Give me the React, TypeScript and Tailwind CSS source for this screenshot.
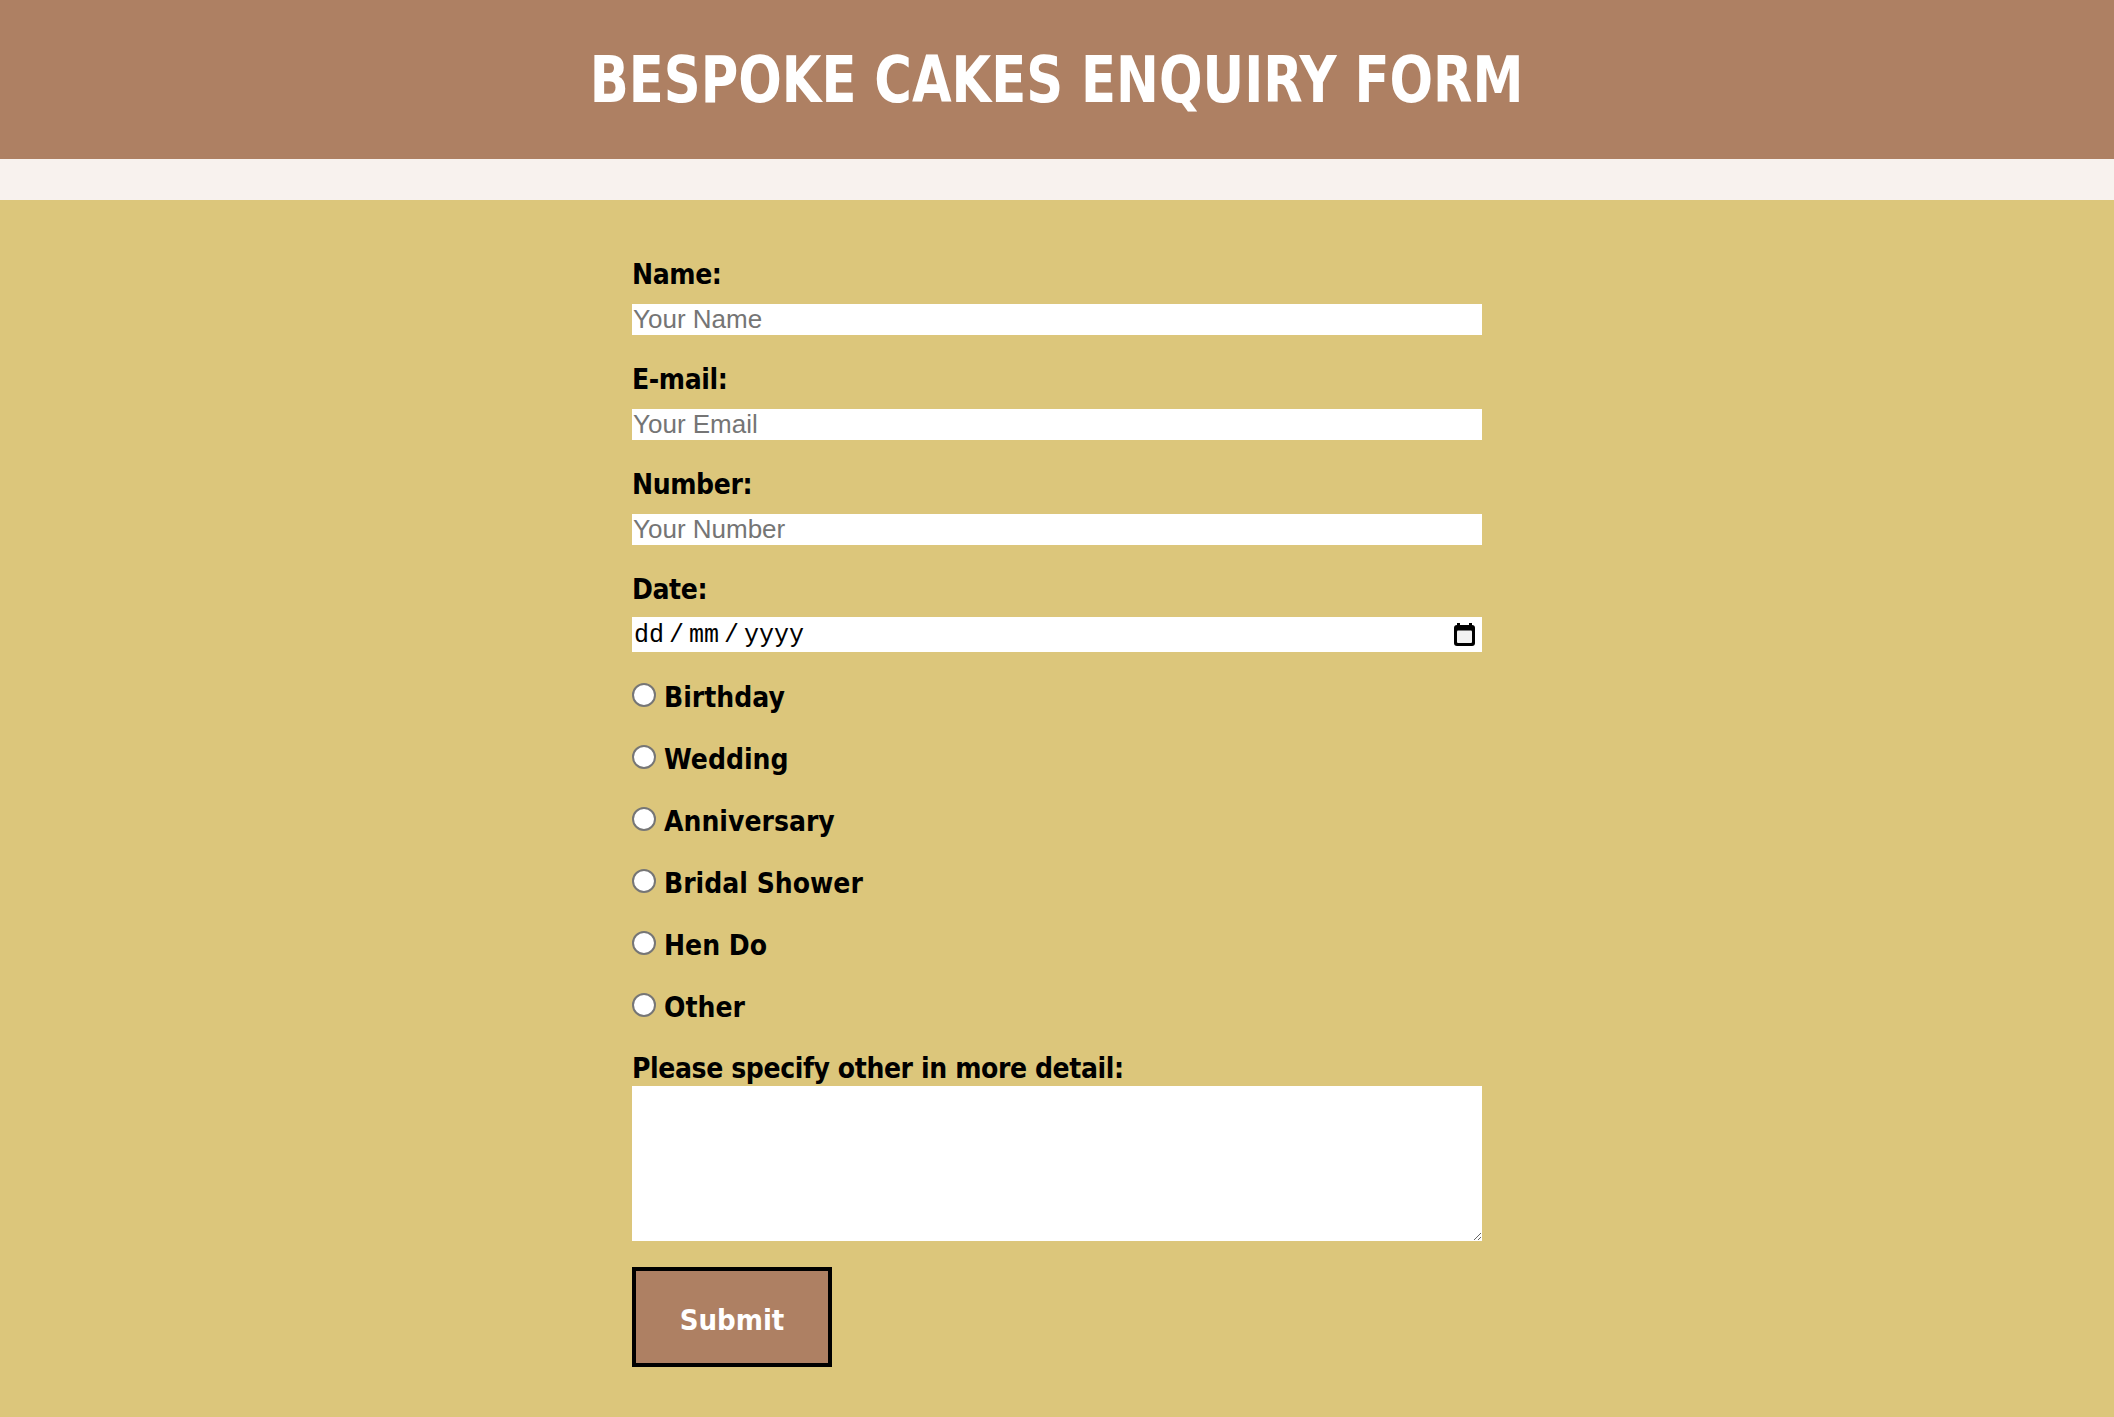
import { useState } from "react";

const occasions = ["Birthday", "Wedding", "Anniversary", "Bridal Shower", "Hen Do", "Other"];

// Chrome-style calendar glyph shown in the date field
function CalendarIcon() {
  return (
    <svg width="21" height="23" viewBox="0 0 21 23" aria-hidden="true">
      <rect x="3" y="0" width="3" height="4" fill="#000" />
      <rect x="15" y="0" width="3" height="4" fill="#000" />
      <rect x="0" y="2" width="21" height="21" rx="3" fill="#000" />
      <rect x="3" y="7.5" width="15" height="12.5" rx="1" fill="#f2f2f2" />
    </svg>
  );
}

export default function App() {
  const [occasion, setOccasion] = useState("");

  const condensed = "font-['DejaVu_Sans_Condensed','DejaVu_Sans',sans-serif] font-stretch-condensed font-bold";
  const fieldLabel = `block h-[38px] text-[28px] leading-[38px] tracking-[-0.4px] text-black ${condensed}`;
  const inputCls =
    "block w-full h-[31px] bg-white px-[1px] text-[26px] font-['Liberation_Sans',Arial,sans-serif] text-black placeholder:text-[#757575] outline-none border-0";

  return (
    <div className="min-h-screen bg-[#dcc67b]">
      {/* Header */}
      <header className="h-[159px] bg-[#ae8063] flex items-center justify-center">
        <h1 className={`text-[64px] leading-none text-white uppercase scale-x-[0.89] ${condensed}`}>
          Bespoke Cakes Enquiry Form
        </h1>
      </header>
      <div className="h-[41px] bg-[#f8f2ee]" />

      <main className="pt-[56px] pb-[50px]">
        <form className="w-[850px] mx-auto" onSubmit={(e) => e.preventDefault()}>
          <label htmlFor="name" className={`${fieldLabel} mb-[10px]`}>
            Name:
          </label>
          <input id="name" type="text" placeholder="Your Name" className={`${inputCls} mb-[26px]`} />

          <label htmlFor="email" className={`${fieldLabel} mb-[10px]`}>
            E-mail:
          </label>
          <input id="email" type="email" placeholder="Your Email" className={`${inputCls} mb-[26px]`} />

          <label htmlFor="number" className={`${fieldLabel} mb-[10px]`}>
            Number:
          </label>
          <input id="number" type="tel" placeholder="Your Number" className={`${inputCls} mb-[26px]`} />

          <label className={`${fieldLabel} mb-[8px]`}>Date:</label>
          <div className="h-[35px] bg-white flex items-center justify-between pl-[2px] pr-[7px]">
            <span className="pt-[2px] font-['Liberation_Mono','Courier_New',monospace] text-[25px] text-black leading-none">
              dd<span className="mx-[5px]">/</span>mm<span className="mx-[5px]">/</span>yyyy
            </span>
            <CalendarIcon />
          </div>

          {/* Occasion radios */}
          <div className="mt-[12px]">
            {occasions.map((o) => (
              <label key={o} className="flex items-center h-[62px] cursor-pointer">
                <input
                  type="radio"
                  name="occasion"
                  value={o}
                  checked={occasion === o}
                  onChange={() => setOccasion(o)}
                  className="appearance-none w-[24px] h-[24px] rounded-full bg-white border-2 border-[#767676] checked:border-[7px] checked:border-[#0075ff] m-0 shrink-0"
                />
                <span className={`ml-[8px] pt-[5px] text-[28px] leading-[38px] text-black ${condensed}`}>{o}</span>
              </label>
            ))}
          </div>

          <label
            htmlFor="detail"
            className={`block mt-[17px] text-[28px] leading-[32px] tracking-[-0.4px] text-black ${condensed}`}
          >
            Please specify other in more detail:
          </label>
          <textarea
            id="detail"
            className="block w-full h-[155px] mt-[1px] bg-white border-0 outline-none p-[2px] text-[26px]"
          />

          <button
            type="submit"
            className={`mt-[26px] w-[200px] h-[100px] pt-[7px] border-4 border-black bg-[#ae8063] text-white text-[29px] cursor-pointer ${condensed}`}
          >
            Submit
          </button>
        </form>
      </main>
    </div>
  );
}
